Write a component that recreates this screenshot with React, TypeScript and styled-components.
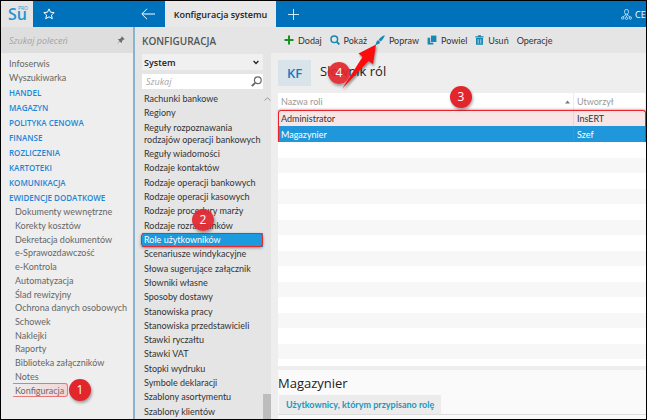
import React from "react";
import styled, { createGlobalStyle, css } from "styled-components";

const Global = createGlobalStyle`
  *, *::before, *::after { box-sizing: border-box; }
  body { margin: 0; }
  body, button, input, select { font-family: Lato, "Open Sans", sans-serif; font-size: 9px; }
  button { border: 0; background: none; padding: 0; color: inherit; cursor: pointer; }
  ul { margin: 0; padding: 0; list-style: none; }
  h1, h2 { margin: 0; font-family: "Open Sans", sans-serif; font-weight: 400; }
  a { color: inherit; text-decoration: none; }
`;

const Window = styled.div`
  display: flex;
  flex-direction: column;
  min-height: 100vh;
  overflow: hidden;
  border: 1px solid #000;
  background: #eeeeee;
  color: #333;
`;

/* ---------- title bar ---------- */

const TitleBar = styled.header`
  display: flex;
  align-items: stretch;
  height: 26px;
  background: #0072bc;
  color: #fff;
`;

const Logo = styled.a`
  flex: none;
  width: 32px;
  background: #e5e5e5;
  svg { display: block; }
`;

const BarButton = styled.button<{ $width: number }>`
  display: flex;
  align-items: center;
  justify-content: center;
  flex: none;
  width: ${(p) => p.$width}px;
`;

const BarGap = styled.div`
  flex: none;
  width: 65px;
`;

const PageTab = styled.button`
  flex: none;
  width: 111px;
  background: #e8e8e8;
  color: #222;
  font-family: "Open Sans", sans-serif;
  font-size: 9px;
  font-weight: 600;
  white-space: nowrap;
`;

const Account = styled.button`
  display: flex;
  align-items: center;
  gap: 3px;
  width: 25px;
  margin-left: auto;
  overflow: hidden;
  white-space: nowrap;
  font-family: "Open Sans", sans-serif;
  svg { flex: none; }
`;

const Body = styled.div`
  display: flex;
  flex: 1;
`;

/* ---------- left navigation ---------- */

const Sidebar = styled.nav`
  flex: none;
  width: 134px;
  border-right: 2px solid #85b5d3;
  background: #eeeeee;
`;

const CommandSearch = styled.label`
  display: flex;
  align-items: center;
  height: 26px;
  padding: 0 8px;
  background: #dedede;
`;

const SearchInput = styled.input`
  flex: 1;
  min-width: 0;
  padding: 0;
  border: 0;
  outline: 0;
  background: none;
  font-family: "Open Sans", sans-serif;
  font-style: italic;
  &::placeholder { color: #a4a4a4; opacity: 1; }
`;

const NavList = styled.ul`
  padding: 4px 0 0 8px;
`;

const NavItem = styled.li<{ $group?: boolean }>`
  color: #666;
  line-height: 14px;
  white-space: nowrap;
  ${(p) =>
    p.$group &&
    css`
      color: #1c86d8;
      font-family: "Open Sans", sans-serif;
      font-size: 8px;
      font-weight: 600;
      line-height: 15px;
    `}
`;

const SubList = styled.ul`
  display: grid;
  grid-template-rows: repeat(14, 1fr);
  height: 192px;
  padding-left: 14px;
  color: #666;
`;

const SubItem = styled.li`
  display: flex;
  align-items: center;
  position: relative;
  white-space: nowrap;
`;

/* ---------- configuration list ---------- */

const ConfigPanel = styled.aside`
  display: flex;
  flex-direction: column;
  flex: none;
  width: 136px;
  background: #e5e5e5;
`;

const PanelHeading = styled.h2`
  height: 27px;
  padding-left: 7px;
  line-height: 28px;
  color: #555;
  font-size: 10px;
  font-weight: 600;
`;

const SelectField = styled.div`
  display: flex;
  align-items: center;
  position: relative;
  height: 16px;
  margin: 0 8px 4px 7px;
  background: #f0f0f0;
  svg { position: absolute; right: 4px; pointer-events: none; }
`;

const ScopeSelect = styled.select`
  flex: 1;
  height: 16px;
  padding: 0 2px;
  border: 0;
  appearance: none;
  background: none;
  color: #222;
  font-family: "Open Sans", sans-serif;
  font-weight: 600;
`;

const ListSearch = styled.label`
  display: flex;
  align-items: center;
  height: 15px;
  margin: 0 8px 3px 7px;
  padding: 0 1px 0 4px;
  background: #fff;
`;

const ListArea = styled.div`
  display: flex;
  flex: 1;
`;

const ConfigList = styled.ul`
  display: flex;
  flex-direction: column;
  flex: 1;
  min-width: 0;
  padding-left: 7px;
  color: #333;
`;

const ConfigItem = styled.li<{ $active?: boolean }>`
  display: flex;
  align-items: center;
  position: relative;
  flex: 1 0 auto;
  padding: 1px 2px;
  line-height: 12px;
  white-space: pre;
  ${(p) =>
    p.$active &&
    css`
      z-index: 1;
      background: #1b9ade;
      color: #fff;
    `}
`;

const ScrollTrack = styled.div`
  display: flex;
  flex-direction: column;
  align-items: center;
  justify-content: space-between;
  flex: none;
  width: 8px;
  padding-top: 5px;
`;

const ScrollThumb = styled.div`
  width: 8px;
  height: 25px;
  background: #bdbdbd;
`;

/* ---------- content ---------- */

const Content = styled.main`
  display: flex;
  flex-direction: column;
  flex: 1;
  min-width: 0;
`;

const Toolbar = styled.div`
  display: flex;
  align-items: center;
  gap: 8px;
  height: 26px;
  padding-left: 13px;
  background: #e5e5e5;
`;

const ToolButton = styled.button`
  display: flex;
  align-items: center;
  gap: 4px;
  position: relative;
  white-space: nowrap;
`;

const Heading = styled.div`
  display: flex;
  position: relative;
  gap: 9px;
  padding: 7px 0 7px 7px;
`;

const Monogram = styled.div`
  width: 33px;
  height: 26px;
  background: #d8e4ea;
  color: #1878c0;
  font-family: "Open Sans", sans-serif;
  font-size: 13px;
  font-weight: 600;
  line-height: 26px;
  text-align: center;
`;

const Title = styled.h1`
  color: #222;
  font-size: 13px;
  line-height: 22px;
`;

const TableArea = styled.section`
  position: relative;
  margin-left: 7px;
  padding-bottom: 7px;
  background: #fff;
`;

const RoleTable = styled.table`
  width: 100%;
  border-collapse: collapse;
  table-layout: fixed;
`;

const HeadCell = styled.th<{ $width?: number }>`
  width: ${(p) => (p.$width ? `${p.$width}px` : "auto")};
  height: 17px;
  padding: 0 3px;
  border-right: 1px solid #eee;
  color: #999;
  font-weight: 400;
  line-height: 14px;
  text-align: left;
  svg { float: right; margin-top: 5px; }
`;

const RoleRow = styled.tr<{ $tone: string; $light?: boolean }>`
  height: 16px;
  background: ${(p) => p.$tone};
  color: ${(p) => (p.$light ? "#fff" : "#333")};
`;

const SpareRow = styled.tr`
  height: 16px;
  &:nth-child(even) { height: 15px; background: #f7f7f7; }
`;

const Cell = styled.td`
  padding: 2px 3px 0;
  line-height: 14px;
  & + & { border-left: 1px solid rgba(160, 160, 160, 0.2); }
`;

const EmptyCell = styled.td`
  padding: 0;
`;

const Details = styled.section`
  flex: 1;
  margin: 4px 0 0 7px;
  background: #fafafa;
`;

const DetailsTitle = styled.h2`
  height: 25px;
  color: #222;
  font-size: 13px;
  line-height: 26px;
`;

const DetailTabs = styled.div`
  height: 20px;
  padding-left: 1px;
  border-bottom: 1px solid #dedede;
`;

const DetailTab = styled.button`
  display: block;
  height: 19px;
  padding: 0 7px;
  background: #ececec;
  color: #1b98bd;
  font-weight: 700;
  white-space: nowrap;
`;

/* ---------- callouts ---------- */

const Badge = styled.span<{ $left: string; $top: number; $alpha?: number }>`
  position: absolute;
  left: ${(p) => p.$left};
  top: ${(p) => p.$top}px;
  z-index: 3;
  width: 22px;
  height: 22px;
  border-radius: 50%;
  background: rgba(226, 38, 44, ${(p) => p.$alpha ?? 1});
  box-shadow: 1px 2px 3px rgba(0, 0, 0, 0.35);
  color: #fff;
  font-family: "Open Sans", sans-serif;
  font-size: 12px;
  font-weight: 400;
  line-height: 22px;
  text-align: center;
`;

const NavFrame = styled.span`
  position: absolute;
  inset: 0 auto 0 -2px;
  width: 55px;
  border: 1px solid rgba(232, 80, 80, 0.75);
  border-left: 0;
  border-radius: 0 3px 3px 0;
  background: linear-gradient(90deg, rgba(255, 120, 120, 0), rgba(255, 120, 120, 0.2));
`;

const ItemFrame = styled.span`
  position: absolute;
  inset: 0 0 0 -1px;
  border: 1px solid #e8282c;
  border-radius: 3px;
  box-shadow: 0 1px 3px rgba(0, 0, 0, 0.4);
`;

const RowsFrame = styled.span`
  position: absolute;
  inset: 17px 0 auto 0;
  height: 32px;
  border: solid #ee2229;
  border-width: 1px 1px 0;
  border-radius: 3px 3px 0 0;
  box-shadow: 0 -1px 2px rgba(0, 0, 0, 0.25);
  pointer-events: none;
`;

const Arrow = styled.svg`
  position: absolute;
  left: -36px;
  top: 9px;
  z-index: 4;
  overflow: visible;
  filter: drop-shadow(1px 2px 1px rgba(0, 0, 0, 0.4));
  pointer-events: none;
`;

const groups = [
  "HANDEL",
  "MAGAZYN",
  "POLITYKA CENOWA",
  "FINANSE",
  "ROZLICZENIA",
  "KARTOTEKI",
  "KOMUNIKACJA",
  "EWIDENCJE DODATKOWE",
];

const records = [
  "Dokumenty wewnętrzne",
  "Korekty kosztów",
  "Dekretacja dokumentów",
  "e-Sprawozdawczość",
  "e-Kontrola",
  "Automatyzacja",
  "Ślad rewizyjny",
  "Ochrona danych osobowych",
  "Schowek",
  "Naklejki",
  "Raporty",
  "Biblioteka załączników",
  "Notes",
  "Konfiguracja",
];

const settings = [
  "Rachunki bankowe",
  "Regiony",
  "Reguły rozpoznawania\nrodzajów operacji bankowych",
  "Reguły wiadomości",
  "Rodzaje kontaktów",
  "Rodzaje operacji bankowych",
  "Rodzaje operacji kasowych",
  "Rodzaje procedury marży",
  "Rodzaje rozrachunków",
  "Role użytkowników",
  "Scenariusze windykacyjne",
  "Słowa sugerujące załącznik",
  "Słowniki własne",
  "Sposoby dostawy",
  "Stanowiska pracy",
  "Stanowiska przedstawicieli",
  "Stawki ryczałtu",
  "Stawki VAT",
  "Stopki wydruku",
  "Symbole deklaracji",
  "Szablony asortymentu",
  "Szablony klientów",
];

const PlusIcon = () => (
  <svg width="10" height="10" viewBox="0 0 10 10">
    <path d="M5 .5v9M.5 5h9" stroke="#15921f" strokeWidth="2" />
  </svg>
);

const LensIcon = () => (
  <svg width="10" height="10" viewBox="0 0 10 10" fill="none" stroke="#1588b5">
    <circle cx="4.3" cy="4.3" r="3.3" strokeWidth="1.5" />
    <path d="M6.8 6.8 9.4 9.4" strokeWidth="1.9" />
  </svg>
);

const BrushIcon = () => (
  <svg width="10" height="10" viewBox="0 0 10 10" fill="#1588b5">
    <path d="M9.8.2C8 .5 5 2.500 3.700 4.700L5.500 6.400C7.600 4.900 9.500 2.200 9.800.2Z" />
    <path d="M3.300 5.200 5 6.900C4.900 9 2.300 9.900.2 9.600 1.500 8.900.900 5.700 3.300 5.200Z" />
  </svg>
);

const CopyIcon = () => (
  <svg width="10" height="10" viewBox="0 0 10 10" fill="#1588b5">
    <path d="M4 .6H9.400V7H4Z" />
    <path d="M.6 2.800H3.200V7.800H6.400V9.600H.6Z" />
  </svg>
);

const TrashIcon = () => (
  <svg width="9" height="10" viewBox="0 0 9 10" fill="#1588b5">
    <path d="M3 .3h3v.9h2.600v1.200H.4V1.200H3ZM1 3h7v6.800H1Z" />
    <path d="M3.200 4.200v4.400M5.800 4.200v4.400" stroke="#e5e5e5" strokeWidth=".8" />
  </svg>
);

const tools = [
  { label: "Dodaj", icon: <PlusIcon /> },
  { label: "Pokaż", icon: <LensIcon /> },
  { label: "Popraw", icon: <BrushIcon />, pointed: true },
  { label: "Powiel", icon: <CopyIcon /> },
  { label: "Usuń", icon: <TrashIcon /> },
  { label: "Operacje", icon: null },
];

const spareRows = Array.from({ length: 14 }, (_, i) => i);

export default function App() {
  return (
    <>
      <Global />
      <Window>
        <TitleBar>
          <Logo href="#" aria-label="Su PRO">
            <svg width="32" height="26" viewBox="0 0 32 26">
              <text x="7" y="19" fontFamily="Open Sans, sans-serif" fontSize="16" fontWeight="600" fill="#2494d0">
                Su
              </text>
              <text x="17" y="9" fontFamily="Open Sans, sans-serif" fontSize="5" fill="#2f95cf">
                PRO
              </text>
            </svg>
          </Logo>
          <BarButton $width={32} aria-label="Ulubione">
            <svg width="12" height="12" viewBox="0 0 12 12" fill="none" stroke="#fff">
              <path d="M6 .9 7.500 4.200 11.200 4.600 8.400 7 9.300 10.700 6 8.800 2.700 10.700 3.600 7 .8 4.600 4.500 4.200Z" />
            </svg>
          </BarButton>
          <BarGap />
          <BarButton $width={35} aria-label="Wstecz">
            <svg width="14" height="12" viewBox="0 0 14 12" fill="none" stroke="#fff">
              <path d="M14 6H1M6 .8.800 6 6 11.200" />
            </svg>
          </BarButton>
          <PageTab>Konfiguracja systemu</PageTab>
          <BarButton $width={34} aria-label="Nowa karta">
            <svg width="11" height="11" viewBox="0 0 11 11" stroke="#cfe6f5">
              <path d="M5.500 0v11M0 5.500h11" />
            </svg>
          </BarButton>
          <Account>
            <svg width="11" height="11" viewBox="0 0 11 11" fill="none" stroke="#d5e8f5" strokeWidth=".8">
              <rect x="3.600" y=".5" width="3.800" height="4.600" rx="1.500" />
              <path d="M4.500 5v1.300L1.800 7.800M6.500 5v1.300L9.200 7.800M5.500 6.500V8" />
              <circle cx="1.700" cy="9" r="1.200" />
              <circle cx="5.500" cy="9.300" r="1.200" />
              <circle cx="9.300" cy="9" r="1.200" />
            </svg>
            CE
          </Account>
        </TitleBar>

        <Body>
          <Sidebar>
            <CommandSearch>
              <SearchInput placeholder="Szukaj poleceń" aria-label="Szukaj poleceń" />
              <svg width="8" height="8" viewBox="0 0 8 8" fill="#6e6e6e">
                <path d="M4.800.2 7.800 3.200 7 3.600 6.600 3.500 5 5.100 5 6.600 4.400 7 2.800 5.400.3 7.800.2 7.700 2.500 5.100 1 3.600 1.400 3 2.900 3 4.500 1.400 4.400 1Z" />
              </svg>
            </CommandSearch>
            <NavList>
              <NavItem><a href="#">Infoserwis</a></NavItem>
              <NavItem><a href="#">Wyszukiwarka</a></NavItem>
              {groups.map((g) => (
                <NavItem key={g} $group><a href="#">{g}</a></NavItem>
              ))}
            </NavList>
            <SubList>
              {records.map((r) => (
                <SubItem key={r}>
                  <a href="#">{r}</a>
                  {r === "Konfiguracja" && (
                    <>
                      <NavFrame />
                      <Badge $left="54px" $top={-4}>1</Badge>
                    </>
                  )}
                </SubItem>
              ))}
            </SubList>
          </Sidebar>

          <ConfigPanel>
            <PanelHeading>KONFIGURACJA</PanelHeading>
            <SelectField>
              <ScopeSelect aria-label="Zakres">
                <option>System</option>
              </ScopeSelect>
              <svg width="6" height="5" viewBox="0 0 6 5" fill="none" stroke="#222" strokeWidth="1.300">
                <path d="M.6 1 3 3.500 5.400 1" />
              </svg>
            </SelectField>
            <ListSearch>
              <SearchInput placeholder="Szukaj" aria-label="Szukaj" />
              <svg width="11" height="11" viewBox="0 0 11 11" fill="none" stroke="#666">
                <circle cx="6.800" cy="4.200" r="3.400" strokeWidth="1.200" />
                <path d="M4.200 6.800.8 10.200" strokeWidth="1.900" />
              </svg>
            </ListSearch>
            <ListArea>
              <ConfigList>
                {settings.map((s) => (
                  <ConfigItem key={s} $active={s === "Role użytkowników"}>
                    <a href="#">{s}</a>
                    {s === "Role użytkowników" && (
                      <>
                        <ItemFrame />
                        <Badge $left="50px" $top={-24} $alpha={0.92}>2</Badge>
                      </>
                    )}
                  </ConfigItem>
                ))}
              </ConfigList>
              <ScrollTrack>
                <svg width="7" height="4" viewBox="0 0 7 4" fill="none" stroke="#999">
                  <path d="M.5 3.500 3.500.8 6.500 3.500" />
                </svg>
                <ScrollThumb />
              </ScrollTrack>
            </ListArea>
          </ConfigPanel>

          <Content>
            <Toolbar>
              {tools.map((t) => (
                <ToolButton key={t.label}>
                  {t.icon}
                  {t.label}
                  {t.pointed && (
                    <Arrow width="40" height="46" viewBox="0 0 40 46" fill="#fb0d0d">
                      <path d="M3 45 23.500 13 19.500 9.500 37 .5 34 20 29.500 17Z" />
                    </Arrow>
                  )}
                </ToolButton>
              ))}
            </Toolbar>
            <Heading>
              <Monogram>KF</Monogram>
              <Title>Słownik ról</Title>
              <Badge $left="57px" $top={9} $alpha={0.92}>4</Badge>
            </Heading>
            <TableArea>
              <RoleTable>
                <thead>
                  <tr>
                    <HeadCell>
                      Nazwa roli
                      <svg width="5" height="4" viewBox="0 0 5 4" fill="#777">
                        <path d="M2.500.5 5 3.500H0Z" />
                      </svg>
                    </HeadCell>
                    <HeadCell $width={72}>Utworzył</HeadCell>
                  </tr>
                </thead>
                <tbody>
                  <RoleRow $tone="#f8e6e6">
                    <Cell>Administrator</Cell>
                    <Cell>InsERT</Cell>
                  </RoleRow>
                  <RoleRow $tone="#2097da" $light>
                    <Cell>Magazynier</Cell>
                    <Cell>Szef</Cell>
                  </RoleRow>
                  {spareRows.map((i) => (
                    <SpareRow key={i}>
                      <EmptyCell colSpan={2} />
                    </SpareRow>
                  ))}
                </tbody>
              </RoleTable>
              <RowsFrame />
              <Badge $left="172px" $top={-7}>3</Badge>
            </TableArea>
            <Details>
              <DetailsTitle>Magazynier</DetailsTitle>
              <DetailTabs>
                <DetailTab>Użytkownicy, którym przypisano rolę</DetailTab>
              </DetailTabs>
            </Details>
          </Content>
        </Body>
      </Window>
    </>
  );
}
